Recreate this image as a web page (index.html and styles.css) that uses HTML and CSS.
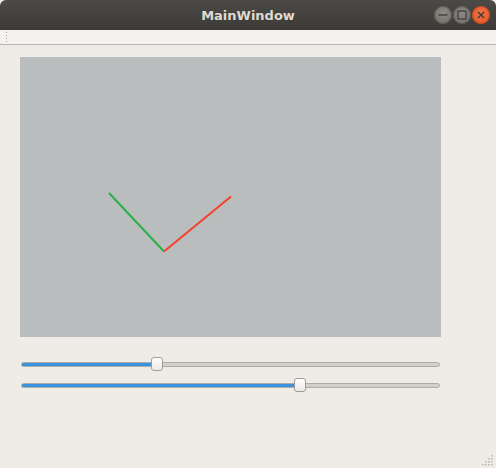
FILE: index.html
```html
<!DOCTYPE html>
<html>
<head>
<meta charset="utf-8">
<link rel="stylesheet" href="styles.css">
</head>
<body>
<div class="window">
  <div class="titlebar">
    <div class="title">MainWindow</div>
    <div class="controls">
      <div class="btn btn-min"><svg width="18" height="18" viewBox="0 0 18 18"><line x1="4.5" y1="9" x2="13.5" y2="9" stroke="#3c3b37" stroke-width="1.3"/></svg></div>
      <div class="btn btn-max"><svg width="18" height="18" viewBox="0 0 18 18"><rect x="5" y="5" width="8" height="8" fill="none" stroke="#3c3b37" stroke-width="1.2"/></svg></div>
      <div class="btn btn-close"><svg width="18" height="18" viewBox="0 0 18 18"><path d="M6 6 L12 12 M12 6 L6 12" stroke="#3c3b37" stroke-width="1.4"/></svg></div>
    </div>
  </div>
  <div class="toolbar"><div class="grip"></div></div>
  <div class="content">
    <div class="canvas">
      <svg width="421" height="280" viewBox="0 0 421 280">
        <line x1="89" y1="136" x2="144" y2="194.5" stroke="#28b046" stroke-width="2"/>
        <line x1="144" y1="194.5" x2="211" y2="139.5" stroke="#f2412f" stroke-width="2"/>
      </svg>
    </div>
    <div class="sliders">
      <div class="slider"><div class="groove"><div class="fill" style="width:136px"></div></div><div class="handle" style="left:130px"></div></div>
      <div class="slider"><div class="groove"><div class="fill" style="width:279px"></div></div><div class="handle" style="left:273px"></div></div>
    </div>
  </div>
  <div class="sizegrip">
    <svg width="12" height="12" viewBox="0 0 12 12" fill="#b8b4ae">
      <rect x="9" y="1" width="1.5" height="1.5"/>
      <rect x="6" y="4" width="1.5" height="1.5"/><rect x="9" y="4" width="1.5" height="1.5"/>
      <rect x="3" y="7" width="1.5" height="1.5"/><rect x="6" y="7" width="1.5" height="1.5"/><rect x="9" y="7" width="1.5" height="1.5"/>
      <rect x="0" y="10" width="1.5" height="1.5"/><rect x="3" y="10" width="1.5" height="1.5"/><rect x="6" y="10" width="1.5" height="1.5"/><rect x="9" y="10" width="1.5" height="1.5"/>
    </svg>
  </div>
</div>
</body>
</html>
```
FILE: styles.css
```css
html, body {
  margin: 0;
  padding: 0;
  background: #efebe7;
}
.window {
  position: relative;
  width: 496px;
  height: 468px;
  background: #efebe7;
  overflow: hidden;
  font-family: "DejaVu Sans", "Noto Sans", sans-serif;
}
.titlebar {
  position: relative;
  height: 30px;
  background: linear-gradient(#4b4a45, #3c3b37);
  border-radius: 6px 6px 0 0;
  display: flex;
  align-items: center;
  justify-content: center;
}
.title {
  color: #dfdbd2;
  font-weight: bold;
  font-size: 13px;
}
.controls {
  position: absolute;
  right: 6px;
  top: 6px;
  display: flex;
  gap: 1px;
}
.btn {
  width: 18px;
  height: 18px;
  border-radius: 50%;
  display: flex;
  align-items: center;
  justify-content: center;
}
.btn-min, .btn-max {
  background: radial-gradient(circle at 50% 40%, #8c8a85, #6d6b66);
  box-shadow: inset 0 0 0 1px #5a5853;
}
.btn-close {
  background: radial-gradient(circle at 50% 40%, #f2734a, #e2541f);
  box-shadow: inset 0 0 0 1px #c44518;
}
.toolbar {
  height: 14px;
  background: #f4f2ef;
  border-bottom: 1px solid #b9b6b1;
  position: relative;
}
.grip {
  position: absolute;
  left: 5px;
  top: 1px;
  width: 4px;
  height: 13px;
  background-image: radial-gradient(circle, #a9a6a1 0.7px, transparent 0.9px);
  background-size: 3px 3px;
}
.content {
  padding: 12px 0 0 20px;
}
.canvas {
  width: 421px;
  height: 280px;
  background: #babdbe;
}
.canvas svg {
  display: block;
}
.sliders {
  display: flex;
  flex-direction: column;
  gap: 7px;
  margin-top: 20px;
  margin-left: 1px;
}
.slider {
  position: relative;
  width: 419px;
  height: 14px;
  display: flex;
  align-items: center;
}
.groove {
  width: 419px;
  height: 5px;
  box-sizing: border-box;
  border: 1px solid #aeaba6;
  background: #d3d0cb;
  border-radius: 3px;
  position: relative;
  overflow: hidden;
}
.fill {
  position: absolute;
  left: -1px;
  top: -1px;
  height: 5px;
  box-sizing: border-box;
  background: #3a93de;
  border: 1px solid #1f66a8;
  border-radius: 3px 0 0 3px;
}
.handle {
  position: absolute;
  top: 0;
  width: 12px;
  height: 14px;
  box-sizing: border-box;
  border: 1px solid #a19e99;
  border-radius: 3px;
  background: linear-gradient(#ffffff, #ebe9e6);
}
.sizegrip {
  position: absolute;
  right: 2px;
  bottom: 2px;
  width: 12px;
  height: 12px;
}
.sizegrip svg { display: block; }
```
